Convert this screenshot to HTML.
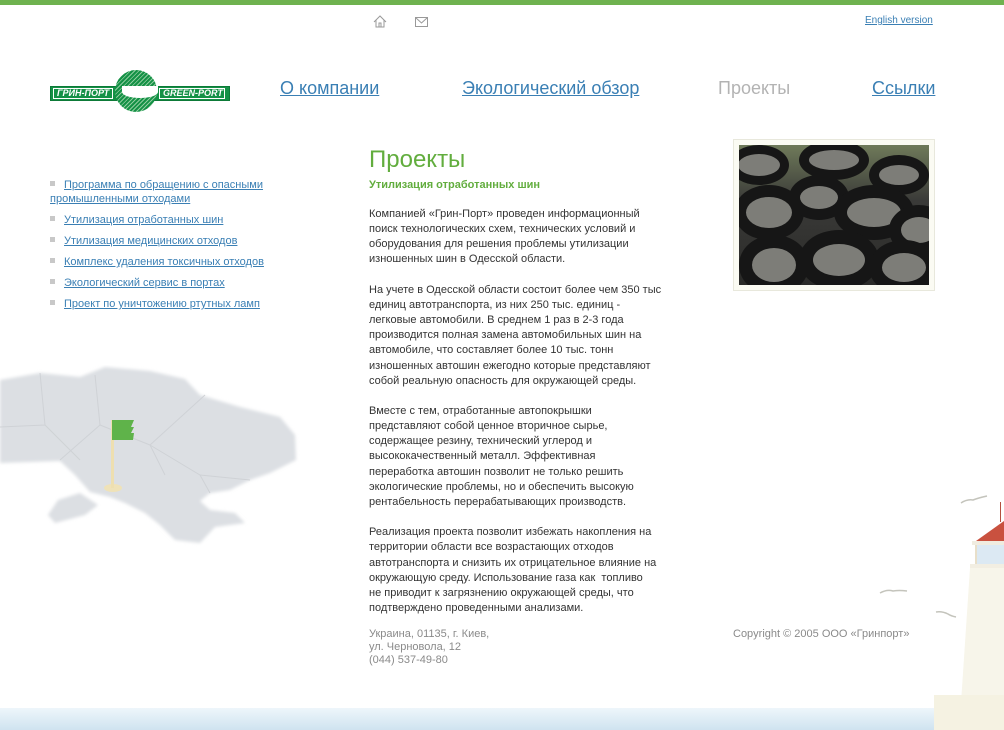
<!DOCTYPE html>
<html><head><meta charset="utf-8"><style>
*{margin:0;padding:0;box-sizing:border-box}
body{width:1004px;height:730px;position:relative;overflow:hidden;background:#fff;font-family:Tahoma,"Liberation Sans","DejaVu Sans",sans-serif;font-size:11px;color:#333}
a{color:#3a7fb4;text-decoration:underline}
.abs{position:absolute}
.nav{font-size:18px;color:#3a7fb4;text-decoration:underline}
.side{left:50px;top:178px;width:230px;line-height:14px}
.side div{margin-bottom:7px}
.side span.b{display:inline-block;width:5px;height:5px;background:#c8c8c8;margin-right:9px;vertical-align:2px}
.txt{left:369px;top:207px;width:320px;line-height:15.15px;color:#333;white-space:nowrap}
.txt p{margin-bottom:15.15px}
.tire{position:absolute;border-radius:50%;border-style:solid;border-color:#161616;background:#7d7d78}
</style></head><body>
<div class="abs" style="left:0;top:0;width:1004px;height:5px;background:#6fb24f"></div>
<svg class="abs" style="left:373px;top:15px" width="14" height="13" viewBox="0 0 14 13"><path d="M1 7L7 1L13 7M3 5V12H11V5M6 12V8H8V12" fill="none" stroke="#999" stroke-width="1"/></svg>
<svg class="abs" style="left:415px;top:17px" width="13" height="10" viewBox="0 0 13 10"><rect x=".5" y=".5" width="12" height="9" fill="none" stroke="#999"/><path d="M.5 .5L6.5 6L12.5 .5" fill="none" stroke="#999"/></svg>
<a class="abs" style="left:865px;top:15px;font-size:10px">English version</a>
<div class="abs" style="left:50px;top:86px;width:180px;height:15px;background:#149146;border:1px solid #0d7a38"></div>
<div class="abs" style="left:53px;top:88px;width:60px;height:11px;border:1px solid #fff"></div>
<div class="abs" style="left:159px;top:88px;width:66px;height:11px;border:1px solid #fff"></div>
<div class="abs" style="left:57px;top:88px;font:italic bold 9px 'Liberation Sans',sans-serif;color:#fff">ГРИН-ПОРТ</div>
<div class="abs" style="left:163px;top:88px;font:italic bold 9px 'Liberation Sans',sans-serif;color:#fff">GREEN-PORT</div>
<div class="abs" style="left:115px;top:70px;width:42px;height:42px;border-radius:50%;background:repeating-linear-gradient(135deg,#149146 0 2px,#8fcc9e 2px 3px)"></div>
<div class="abs" style="left:122px;top:86px;width:36px;height:12px;background:#fff;border-radius:0 0 50% 50%"></div>
<a class="abs nav" style="left:280px;top:78px">О компании</a>
<a class="abs nav" style="left:462px;top:78px">Экологический обзор</a>
<div class="abs" style="left:718px;top:78px;font-size:18px;color:#b3b3b3">Проекты</div>
<a class="abs nav" style="left:872px;top:78px">Ссылки</a>
<div class="abs side">
<div><span class="b"></span><a>Программа по обращению с опасными промышленными отходами</a></div>
<div><span class="b"></span><a>Утилизация отработанных шин </a></div>
<div><span class="b"></span><a>Утилизация медицинских отходов </a></div>
<div><span class="b"></span><a>Комплекс удаления токсичных отходов </a></div>
<div><span class="b"></span><a>Экологический сервис в портах </a></div>
<div><span class="b"></span><a>Проект по уничтожению ртутных ламп </a></div>
</div>
<svg class="abs" style="left:0;top:365px" width="300" height="190" viewBox="0 0 300 190">
<defs><filter id="bl"><feGaussianBlur stdDeviation="1.5"/></filter></defs>
<path filter="url(#bl)" d="M0 15L40 8L80 12L105 2L150 6L185 14L200 30L240 42L280 52L295 70L296 95L270 108L250 115L230 125L210 128L200 136L210 145L235 148L245 158L215 162L200 178L175 175L160 160L145 148L125 138L110 132L90 127L75 110L60 96L0 98Z" fill="#dcdfe3"/>
<path filter="url(#bl)" d="M58 135L80 128L98 140L85 150L55 158L48 150Z" fill="#dcdfe3"/>
<path d="M40 8L45 60L80 95M95 10L100 60L150 80L205 30M150 80L200 110L250 115M100 60L60 95M150 80L165 110M45 60L0 62M200 110L210 128" fill="none" stroke="#cfd2d6" stroke-width="1"/>
<ellipse cx="113" cy="123" rx="9" ry="4" fill="#efe2b8"/>
<rect x="111" y="55" width="3" height="68" fill="#eedfb0"/>
<path d="M112 55H134L131 62L134 62L131 68H134L133 75H112Z" fill="#5fb34a"/>
</svg>
<div class="abs" style="left:369px;top:146px;font-size:24px;color:#62ad3e">Проекты</div>
<div class="abs" style="left:369px;top:179px;font-weight:bold;color:#62ad3e">Утилизация отработанных шин</div>
<div class="abs txt">
<p>Компанией «Грин-Порт» проведен информационный<br>поиск технологических схем, технических условий и<br>оборудования для решения проблемы утилизации<br>изношенных шин в Одесской области.</p>
<p>На учете в Одесской области состоит более чем 350 тыс<br>единиц автотранспорта, из них 250 тыс. единиц -<br>легковые автомобили. В среднем 1 раз в 2-3 года<br>производится полная замена автомобильных шин на<br>автомобиле, что составляет более 10 тыс. тонн<br>изношенных автошин ежегодно которые представляют<br>собой реальную опасность для окружающей среды.</p>
<p>Вместе с тем, отработанные автопокрышки<br>представляют собой ценное вторичное сырье,<br>содержащее резину, технический углерод и<br>высококачественный металл. Эффективная<br>переработка автошин позволит не только решить<br>экологические проблемы, но и обеспечить высокую<br>рентабельность перерабатывающих производств.</p>
<p>Реализация проекта позволит избежать накопления на<br>территории области все возрастающих отходов<br>автотранспорта и снизить их отрицательное влияние на<br>окружающую среду. Использование газа как &nbsp;топливо<br>не приводит к загрязнению окружающей среды, что<br>подтверждено проведенными анализами.</p>
</div>
<div class="abs" style="left:369px;top:628px;line-height:13px;color:#8a8a8a">Украина, 01135, г. Киев,<br>ул. Черновола, 12<br>(044) 537-49-80</div>
<div class="abs" style="left:733px;top:628px;color:#8a8a8a">Copyright © 2005 ООО «Гринпорт»</div>
<div class="abs" style="left:733px;top:139px;width:202px;height:152px;border:1px solid #e8e8dc;background:#fbfbf3"></div>
<div class="abs" style="left:739px;top:145px;width:190px;height:140px;overflow:hidden;background:linear-gradient(#6f7a5a,#3a3a38 40%,#2a2a28)">
<div class="tire" style="left:-10px;top:0;width:60px;height:40px;border-width:9px"></div>
<div class="tire" style="left:60px;top:-5px;width:70px;height:40px;border-width:10px"></div>
<div class="tire" style="left:130px;top:10px;width:60px;height:40px;border-width:10px"></div>
<div class="tire" style="left:-5px;top:40px;width:70px;height:55px;border-width:12px"></div>
<div class="tire" style="left:50px;top:30px;width:60px;height:45px;border-width:11px"></div>
<div class="tire" style="left:95px;top:40px;width:80px;height:55px;border-width:13px"></div>
<div class="tire" style="left:150px;top:60px;width:60px;height:50px;border-width:12px"></div>
<div class="tire" style="left:0;top:90px;width:70px;height:60px;border-width:13px"></div>
<div class="tire" style="left:60px;top:85px;width:80px;height:60px;border-width:14px"></div>
<div class="tire" style="left:130px;top:95px;width:70px;height:55px;border-width:13px"></div>
</div>
<div class="abs" style="left:0;top:708px;width:1004px;height:22px;background:linear-gradient(#eef6fb,#cfe3f0)"></div>
<div class="abs" style="left:1000px;top:502px;width:1px;height:20px;background:#b5503f"></div>
<div class="abs" style="left:976px;top:521px;width:0;height:0;border-left:28px solid transparent;border-bottom:20px solid #c9513f"></div>
<div class="abs" style="left:972px;top:541px;width:32px;height:4px;background:#f0ece0"></div>
<div class="abs" style="left:975px;top:545px;width:29px;height:19px;background:#dce9f3;border-left:2px solid #e8dfc9"></div>
<div class="abs" style="left:970px;top:564px;width:34px;height:4px;background:#f2eee2"></div>
<div class="abs" style="left:960px;top:568px;width:44px;height:150px;background:#f7f5ea;clip-path:polygon(10px 0,100% 0,100% 100%,0 100%)"></div>
<div class="abs" style="left:934px;top:695px;width:70px;height:35px;background:#f5f2e2"></div>
<svg class="abs" style="left:0;top:0" width="1004" height="730"><g fill="none" stroke="#c4c4bc" stroke-width="1.5"><path d="M961 503Q967 499 973 500Q978 498 987 496"/><path d="M880 593Q887 589 893 591Q899 590 907 591"/><path d="M936 612Q942 611 948 614Q951 616 956 617"/></g></svg>
</body></html>
